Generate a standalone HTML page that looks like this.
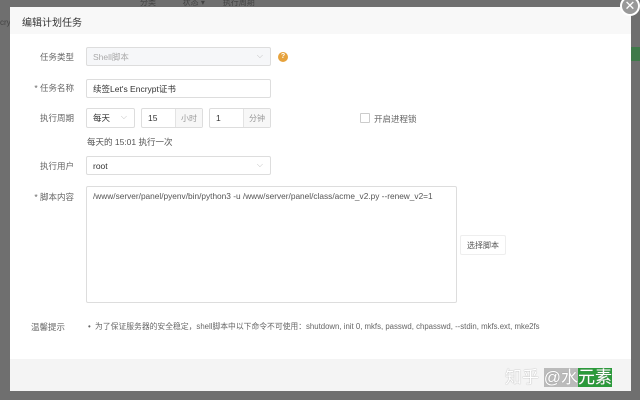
<!DOCTYPE html>
<html><head><meta charset="utf-8"><style>
*{box-sizing:border-box;margin:0;padding:0}
body{width:640px;height:400px;overflow:hidden;background:#6f6f6f;font-family:"Liberation Sans","Noto Sans CJK SC",sans-serif;font-size:9px;color:#555;position:relative}
.a{position:absolute}
.modal{left:10px;top:7px;width:621px;height:384px;background:#fff}
.hd{left:0;top:0;width:621px;height:27px;background:#f8f8f8;font-size:10px;color:#333;padding:7px 0 0 12px}
.ft{left:0;top:352px;width:621px;height:32px;background:#f4f4f4}
.lbl{width:64px;text-align:right;font-size:8.5px;color:#666}
.in{border:1px solid #ddd;border-radius:2px;background:#fff;padding:0 6px;font-size:8.5px;color:#333;display:flex;align-items:center}
.chev{position:absolute;right:7px;top:3px;color:#bbb;font-size:8px}
.add{position:absolute;right:0;top:0;height:100%;background:#f7f7f7;border-left:1px solid #e3e3e3;color:#999;display:flex;align-items:center;justify-content:center;font-size:8px}
</style></head><body>
<div class="a" style="left:140px;top:-3px;color:#444;font-size:8px;white-space:nowrap">分类&nbsp;&nbsp;&nbsp;&nbsp;&nbsp;&nbsp;&nbsp;&nbsp;&nbsp;&nbsp;&nbsp;&nbsp;状态 ▾&nbsp;&nbsp;&nbsp;&nbsp;&nbsp;&nbsp;&nbsp;&nbsp;执行周期</div>
<div class="a" style="left:0;top:18px;color:#444;font-size:8px">cry</div>
<div class="a" style="left:631px;top:47px;width:9px;height:14px;background:#3f7a4a"></div>
<div class="a modal">
 <div class="a hd">编辑计划任务</div>
 <div class="a lbl" style="left:0;top:44px">任务类型</div>
 <div class="a in" style="left:76px;top:40px;width:185px;height:19px;background:#f6f7f9;color:#aaa">Shell脚本<span class="chev">⌵</span></div>
 <div class="a" style="left:268px;top:45px;width:10px;height:10px;border-radius:50%;background:#e6a23c;color:#fff;font-size:7px;text-align:center;line-height:10px;font-weight:bold">?</div>
 <div class="a lbl" style="left:0;top:75px">* 任务名称</div>
 <div class="a in" style="left:76px;top:72px;width:185px;height:19px">续签Let's Encrypt证书</div>
 <div class="a lbl" style="left:0;top:105px">执行周期</div>
 <div class="a in" style="left:76px;top:101px;width:49px;height:20px">每天<span class="chev">⌵</span></div>
 <div class="a in" style="left:131px;top:101px;width:62px;height:20px">15<span class="add" style="width:27px">小时</span></div>
 <div class="a in" style="left:199px;top:101px;width:62px;height:20px">1<span class="add" style="width:27px">分钟</span></div>
 <div class="a" style="left:350px;top:106px;width:10px;height:10px;border:1px solid #ccc;border-radius:1px"></div>
 <div class="a" style="left:364px;top:106px;font-size:8.5px;color:#666">开启进程锁</div>
 <div class="a" style="left:77px;top:129px;font-size:8.5px;color:#555">每天的 15:01 执行一次</div>
 <div class="a lbl" style="left:0;top:153px">执行用户</div>
 <div class="a in" style="left:76px;top:149px;width:185px;height:19px">root<span class="chev">⌵</span></div>
 <div class="a lbl" style="left:0;top:184px">* 脚本内容</div>
 <div class="a in" style="left:76px;top:179px;width:371px;height:117px;align-items:flex-start;padding-top:4px;color:#555;font-size:8.3px;white-space:nowrap">/www/server/panel/pyenv/bin/python3 -u /www/server/panel/class/acme_v2.py --renew_v2=1</div>
 <div class="a in" style="left:450px;top:228px;width:46px;height:20px;justify-content:center;font-size:8px;color:#555;border-color:#eee">选择脚本</div>
 <div class="a lbl" style="left:0;top:314px;width:55px">温馨提示</div>
 <div class="a" style="left:78px;top:314px;font-size:7.8px;color:#666;white-space:nowrap">• &nbsp;为了保证服务器的安全稳定，shell脚本中以下命令不可使用：shutdown, init 0, mkfs, passwd, chpasswd, --stdin, mkfs.ext, mke2fs</div>
 <div class="a ft"></div>
</div>
<div class="a" style="left:620px;top:-4px;width:20px;height:20px;border-radius:50%;background:#999;border:2px solid #fff;color:#fff;font-size:13px;text-align:center;line-height:16px">✕</div>
<div class="a" style="left:505px;top:363px;font-size:17px;color:#fff;white-space:nowrap;text-shadow:0 0 1px #888">知乎 <span style="background:#bbb">@水</span><span style="background:#2a9a3a">元素</span></div>
</body></html>
